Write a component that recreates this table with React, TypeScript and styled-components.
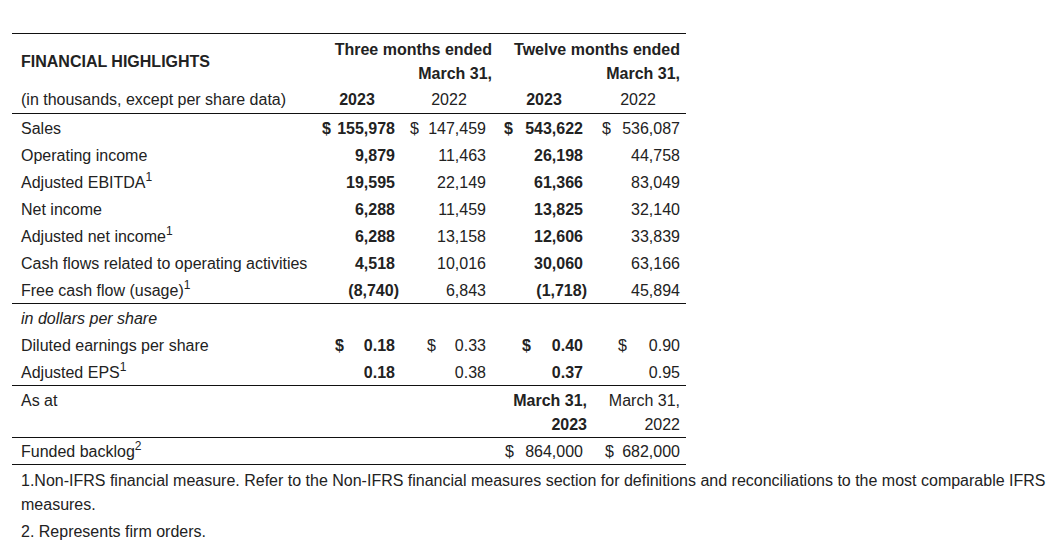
import React from "react";
import styled, { createGlobalStyle, css } from "styled-components";

const GlobalStyle = createGlobalStyle`
  *, *::before, *::after {
    box-sizing: border-box;
  }
  body {
    margin: 0;
    background: #fff;
    font-family: "Liberation Sans", Arial, sans-serif;
    font-size: 16px;
    color: #222;
  }
`;

const COLS = "302px 86px 98px 92px 96px";

const Page = styled.div`
  padding: 33px 0 0 12px;
  width: 1060px;
`;

const Table = styled.div`
  width: 674px;
  border-top: 1px solid #111;
`;

const HeaderGrid = styled.div`
  display: grid;
  grid-template-columns: ${COLS};
  grid-template-rows: 24px 24px 28px;
  padding-top: 4px;
  height: 80px;
  border-bottom: 1px solid #111;
`;

const HeadCell = styled.div<{
  $col: string;
  $row: string;
  $align?: string;
  $pr?: number;
  $bold?: boolean;
}>`
  grid-column: ${({ $col }) => $col};
  grid-row: ${({ $row }) => $row};
  display: flex;
  align-items: center;
  justify-content: ${({ $align }) => $align || "center"};
  padding-right: ${({ $pr }) => $pr || 0}px;
  padding-left: ${({ $align }) => ($align === "flex-start" ? "9px" : "0")};
  font-weight: ${({ $bold }) => ($bold ? 700 : 400)};
  white-space: nowrap;
`;

const Row = styled.div<{ $border?: boolean; $height?: number }>`
  display: grid;
  grid-template-columns: ${COLS};
  align-items: center;
  height: ${({ $height }) => $height || 27}px;
  padding-top: 2px;
  ${({ $border }) =>
    $border &&
    css`
      border-bottom: 1px solid #111;
      height: ${({ $height }: { $height?: number }) => ($height || 27) + 1}px;
    `}
`;

const Label = styled.div<{ $italic?: boolean }>`
  padding-left: 9px;
  white-space: nowrap;
  font-style: ${({ $italic }) => ($italic ? "italic" : "normal")};
`;

const Sup = styled.sup`
  font-size: 12px;
  line-height: 0;
  vertical-align: 7px;
`;

const NumCell = styled.div<{ $bold?: boolean; $pl: number; $pr: number; $dollar?: boolean }>`
  display: flex;
  justify-content: ${({ $dollar }) => ($dollar ? "space-between" : "flex-end")};
  padding-left: ${({ $pl }) => $pl}px;
  padding-right: ${({ $pr }) => $pr}px;
  font-weight: ${({ $bold }) => ($bold ? 700 : 400)};
  white-space: nowrap;
`;

const Value = styled.span<{ $neg?: boolean }>`
  margin-right: ${({ $neg }) => ($neg ? "-4px" : "0")};
`;

const AsAtRow = styled.div`
  display: grid;
  grid-template-columns: ${COLS};
  line-height: 24px;
  padding: 3px 0 0;
  height: 52px;
  border-bottom: 1px solid #111;
`;

const AsAtDate = styled.div<{ $bold?: boolean; $pr: number }>`
  text-align: right;
  padding-right: ${({ $pr }) => $pr}px;
  font-weight: ${({ $bold }) => ($bold ? 700 : 400)};
`;

const Blank = styled.div<{ $span: number }>`
  grid-column: span ${({ $span }) => $span};
`;

const Notes = styled.div`
  width: 1036px;
  padding: 4px 0 0 9px;
  line-height: 24px;
`;

const Note = styled.p`
  margin: 0 0 3px;
`;

type Col = { bold: boolean; pl: number; pr: number; eps: number };

const cols: Col[] = [
  { bold: true, pl: 8, pr: 5, eps: 21 },
  { bold: false, pl: 10, pr: 12, eps: 27 },
  { bold: true, pl: 6, pr: 7, eps: 24 },
  { bold: false, pl: 12, pr: 6, eps: 28 },
];

type Line = {
  label: string;
  sup?: number;
  values: string[];
  dollar?: boolean;
  eps?: boolean;
  border?: boolean;
};

const money: Line[] = [
  { label: "Sales", values: ["155,978", "147,459", "543,622", "536,087"], dollar: true },
  { label: "Operating income", values: ["9,879", "11,463", "26,198", "44,758"] },
  { label: "Adjusted EBITDA", sup: 1, values: ["19,595", "22,149", "61,366", "83,049"] },
  { label: "Net income", values: ["6,288", "11,459", "13,825", "32,140"] },
  { label: "Adjusted net income", sup: 1, values: ["6,288", "13,158", "12,606", "33,839"] },
  { label: "Cash flows related to operating activities", values: ["4,518", "10,016", "30,060", "63,166"] },
  { label: "Free cash flow (usage)", sup: 1, values: ["(8,740)", "6,843", "(1,718)", "45,894"], border: true },
];

const perShare: Line[] = [
  { label: "Diluted earnings per share", values: ["0.18", "0.33", "0.40", "0.90"], dollar: true, eps: true },
  { label: "Adjusted EPS", sup: 1, values: ["0.18", "0.38", "0.37", "0.95"], eps: true, border: true },
];

const DataRow = ({ line }: { line: Line }) => (
  <Row $border={line.border}>
    <Label>
      {line.label}
      {line.sup && <Sup>{line.sup}</Sup>}
    </Label>
    {line.values.map((v, i) => {
      const c = cols[i];
      return (
        <NumCell
          key={i}
          $bold={c.bold}
          $pl={line.eps ? c.eps : c.pl}
          $pr={c.pr}
          $dollar={line.dollar}
        >
          {line.dollar && <span>$</span>}
          <Value $neg={v.startsWith("(")}>{v}</Value>
        </NumCell>
      );
    })}
  </Row>
);

export default function App() {
  return (
    <Page>
      <GlobalStyle />
      <Table>
        <HeaderGrid>
          <HeadCell $col="1" $row="1 / 3" $align="flex-start" $bold>
            FINANCIAL HIGHLIGHTS
          </HeadCell>
          <HeadCell $col="2 / 4" $row="1" $align="flex-end" $pr={6} $bold>
            Three months ended
          </HeadCell>
          <HeadCell $col="2 / 4" $row="2" $align="flex-end" $pr={6} $bold>
            March 31,
          </HeadCell>
          <HeadCell $col="4 / 6" $row="1" $align="flex-end" $pr={6} $bold>
            Twelve months ended
          </HeadCell>
          <HeadCell $col="4 / 6" $row="2" $align="flex-end" $pr={6} $bold>
            March 31,
          </HeadCell>
          <HeadCell $col="1" $row="3" $align="flex-start">
            (in thousands, except per share data)
          </HeadCell>
          <HeadCell $col="2" $row="3" $bold>
            2023
          </HeadCell>
          <HeadCell $col="3" $row="3">
            2022
          </HeadCell>
          <HeadCell $col="4" $row="3" $bold>
            2023
          </HeadCell>
          <HeadCell $col="5" $row="3">
            2022
          </HeadCell>
        </HeaderGrid>

        {money.map((line) => (
          <DataRow key={line.label} line={line} />
        ))}

        <Row>
          <Label $italic>in dollars per share</Label>
        </Row>
        {perShare.map((line) => (
          <DataRow key={line.label} line={line} />
        ))}

        <AsAtRow>
          <Label>As at</Label>
          <Blank $span={2} />
          <AsAtDate $bold $pr={3}>
            March 31,
            <br />
            2023
          </AsAtDate>
          <AsAtDate $pr={6}>
            March 31,
            <br />
            2022
          </AsAtDate>
        </AsAtRow>

        <Row $border $height={26}>
          <Label>
            Funded backlog<Sup>2</Sup>
          </Label>
          <Blank $span={2} />
          <NumCell $pl={7} $pr={7} $dollar>
            <span>$</span>
            <span>864,000</span>
          </NumCell>
          <NumCell $pl={15} $pr={6} $dollar>
            <span>$</span>
            <span>682,000</span>
          </NumCell>
        </Row>
      </Table>
      <Notes>
        <Note>
          1.Non-IFRS financial measure. Refer to the Non-IFRS financial measures section for
          definitions and reconciliations to the most comparable IFRS measures.
        </Note>
        <Note>2. Represents firm orders.</Note>
      </Notes>
    </Page>
  );
}
